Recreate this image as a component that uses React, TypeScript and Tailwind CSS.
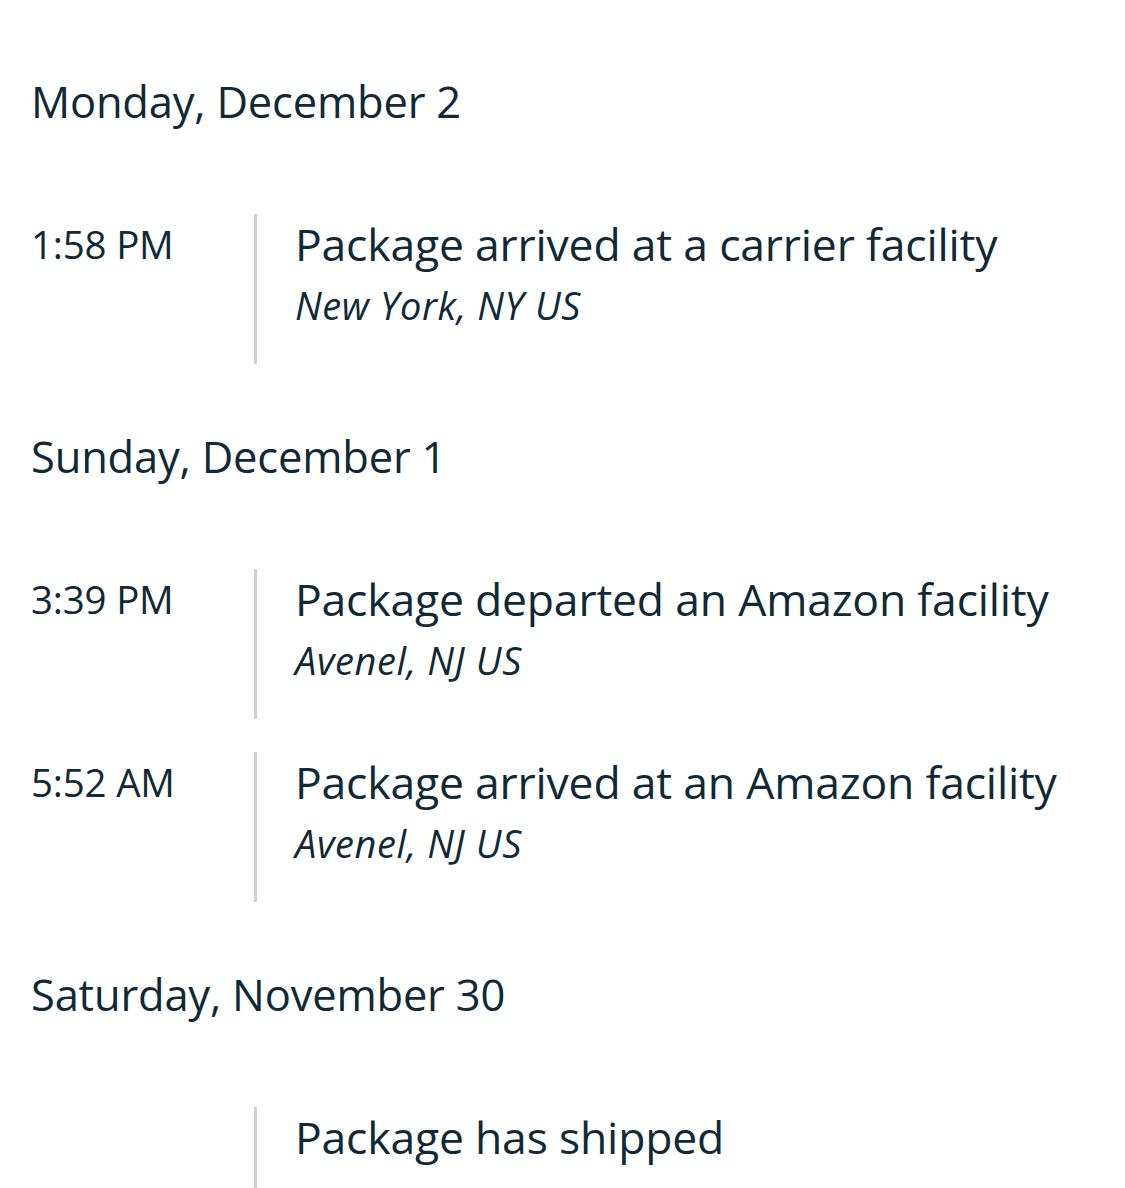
import React from "react";

type Ev = { time?: string; title: string; loc?: string };
type Day = { label: string; events: Ev[] };

const days: Day[] = [
  { label: "Monday, December 2", events: [{ time: "1:58 PM", title: "Package arrived at a carrier facility", loc: "New York, NY US" }] },
  {
    label: "Sunday, December 1",
    events: [
      { time: "3:39 PM", title: "Package departed an Amazon facility", loc: "Avenel, NJ US" },
      { time: "5:52 AM", title: "Package arrived at an Amazon facility", loc: "Avenel, NJ US" },
    ],
  },
  { label: "Saturday, November 30", events: [{ title: "Package has shipped" }] },
];

export default function App() {
  return (
    <div className="h-[1188px] w-[1125px] overflow-hidden bg-white pl-[31px] pt-[72px] text-[#0f2a36]" style={{ fontFamily: '"Open Sans", "Noto Sans", sans-serif' }}>
      <div className="flex flex-col gap-[63px]">
        {days.map((d) => (
          <div key={d.label} className="flex flex-col">
            <div className="flex h-[60px] items-center whitespace-nowrap text-[43.5px] leading-none tracking-[-0.2px]">{d.label}</div>
            <div className="mt-[82px] flex flex-col gap-[33px]">
              {d.events.map((e) => (
                <div key={e.title} className="flex h-[150px]">
                  <div className="w-[223px] shrink-0 whitespace-nowrap pt-[14px] text-[38.5px] leading-[32px] tracking-[-0.2px]">{e.time ?? ""}</div>
                  <div className="w-[3px] shrink-0 bg-[#d0d0d0]" />
                  <div className="flex flex-col pl-[38px]">
                    <div className="flex h-[60px] items-center whitespace-nowrap text-[44.5px] leading-none tracking-[-0.2px]">{e.title}</div>
                    <div className="flex h-[62px] items-center whitespace-nowrap text-[38px] italic leading-none tracking-[0.6px]">{e.loc}</div>
                  </div>
                </div>
              ))}
            </div>
          </div>
        ))}
      </div>
    </div>
  );
}
